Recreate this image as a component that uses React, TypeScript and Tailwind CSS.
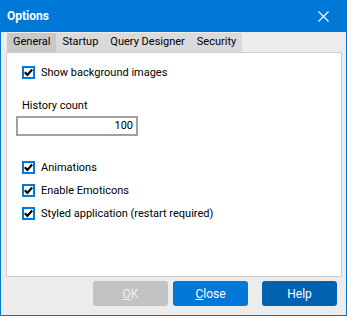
import React from 'react';

const tabs = ['General', 'Startup', 'Query Designer', 'Security'];

function CheckBox({ label }: { label: string }) {
  return (
    <div className="flex items-center gap-[6px] h-[13px]">
      <div className="w-[13px] h-[13px] border-2 border-[#0078d7] bg-white flex items-center justify-center">
        <svg width="9" height="9" viewBox="0 0 9 9">
          <path d="M0.8 4.3 L3.4 6.9 L8.2 1.6" stroke="#000" strokeWidth="2.2" fill="none" />
        </svg>
      </div>
      <span className="leading-none">{label}</span>
    </div>
  );
}

export default function App() {
  return (
    <div
      className="w-[347px] h-[316px] bg-[#0078d7] px-[1px] pb-[1px] flex flex-col text-[11px] text-black"
      style={{ fontFamily: 'Roboto, sans-serif' }}
    >
      {/* title bar */}
      <div className="h-[32px] flex items-center justify-between pl-[6px] pr-[17px] text-white">
        <span className="font-bold text-[12px]">Options</span>
        <svg width="11" height="11" viewBox="0 0 11 11">
          <path d="M0.5 0.5 L10.5 10.5 M10.5 0.5 L0.5 10.5" stroke="#fff" strokeWidth="1.2" />
        </svg>
      </div>

      <div className="flex-1 bg-[#ececec] flex flex-col pl-[5px] pr-[4px]">
        {/* tabs */}
        <div className="flex pt-[1px] pl-[1px] h-[20px]">
          {tabs.map((t, i) => (
            <div
              key={t}
              className={`h-[19px] px-[6px] flex items-center ${i === 0 ? 'bg-[#c8c8c8]' : 'bg-[#dadada]'}`}
            >
              {t}
            </div>
          ))}
        </div>

        {/* panel */}
        <div className="flex-1 bg-white border border-[#cccccc] pl-[15px] pt-[13px]">
          <CheckBox label="Show background images" />
          <div className="mt-[21px] leading-none">History count</div>
          <div className="mt-[5px] -ml-[6px] w-[122px] h-[20px] border-2 border-[#a0a0a0] flex items-center justify-end pr-[3px]">
            100
          </div>
          <div className="mt-[25px] flex flex-col gap-[10px]">
            <CheckBox label="Animations" />
            <CheckBox label="Enable Emoticons" />
            <CheckBox label="Styled application (restart required)" />
          </div>
        </div>

        {/* buttons */}
        <div className="flex justify-end pt-[4px] pb-[9px] pr-[5px] text-[12px]">
          <button className="w-[75px] h-[25px] rounded-[3px] bg-[#c3c3c3] text-[#efefef]">
            <u>O</u>K
          </button>
          <button className="ml-[5px] w-[75px] h-[25px] rounded-[3px] bg-[#0078d7] text-white">
            <u>C</u>lose
          </button>
          <button className="ml-[14px] w-[75px] h-[25px] rounded-[3px] bg-[#0063b1] text-white">
            Help
          </button>
        </div>
      </div>
    </div>
  );
}
